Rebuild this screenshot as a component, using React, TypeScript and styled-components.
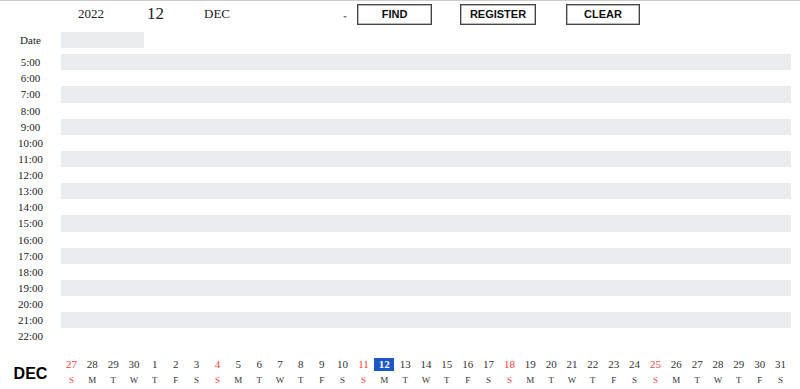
import styled, { createGlobalStyle } from 'styled-components'

const GlobalStyle = createGlobalStyle`
  body {
    margin: 0;
    background: #fff;
    font-family: 'Liberation Serif', 'Times New Roman', serif;
    color: #222;
  }
`

const HOURS = Array.from({ length: 18 }, (_, i) => i + 5)
const WEEK = ['S', 'M', 'T', 'W', 'T', 'F', 'S']

const DAYS = [
  ...[27, 28, 29, 30].map((d) => ({ day: d })),
  ...Array.from({ length: 31 }, (_, i) => ({ day: i + 1 })),
]

const SELECTED_INDEX = 15

const App = () => {
  return (
    <Page>
      <GlobalStyle />
      <Header>
        <Year>2022</Year>
        <DayNumber>12</DayNumber>
        <MonthSelect>
          <span>DEC</span>
          <Caret />
        </MonthSelect>
        <ActionButton $width={75} $offset={0}>
          FIND
        </ActionButton>
        <ActionButton $width={76} $offset={28}>
          REGISTER
        </ActionButton>
        <ActionButton $width={74} $offset={30}>
          CLEAR
        </ActionButton>
      </Header>

      <DateRow>
        <RowLabel>Date</RowLabel>
        <DateBox />
      </DateRow>

      <Schedule>
        {HOURS.map((h, i) => (
          <HourRow key={h}>
            <RowLabel>{h}:00</RowLabel>
            <Band $filled={i % 2 === 0} />
          </HourRow>
        ))}
      </Schedule>

      <Footer>
        <MonthLabel>DEC</MonthLabel>
        <DayStrip>
          {DAYS.map((d, i) => {
            const weekday = WEEK[i % 7]
            const sunday = i % 7 === 0
            return (
              <DayCell key={i}>
                <DayNum $sunday={sunday} $selected={i === SELECTED_INDEX}>
                  {d.day}
                </DayNum>
                <WeekLetter $sunday={sunday}>{weekday}</WeekLetter>
              </DayCell>
            )
          })}
        </DayStrip>
      </Footer>
    </Page>
  )
}

export default App

const Page = styled.div`
  width: 800px;
  height: 389px;
  border-top: 1px solid #cdcdcd;
  box-sizing: border-box;
  overflow: hidden;
`

const Header = styled.div`
  display: flex;
  align-items: center;
  height: 26px;
  padding-left: 78px;
`

const Year = styled.span`
  font-size: 13px;
  width: 27px;
`

const DayNumber = styled.span`
  font-size: 17px;
  margin-left: 42px;
  width: 17px;
`

const MonthSelect = styled.div`
  display: flex;
  align-items: center;
  justify-content: space-between;
  margin-left: 40px;
  width: 143px;
  padding-right: 10px;
  font-size: 13px;
`

const Caret = styled.span`
  width: 0;
  height: 0;
  margin-top: 6px;
  border-left: 2px solid transparent;
  border-right: 2px solid transparent;
  border-top: 2px solid #777;
`

const ActionButton = styled.button<{ $width: number; $offset: number }>`
  width: ${({ $width }) => $width}px;
  height: 21px;
  margin-left: ${({ $offset }) => $offset}px;
  padding: 0;
  background: #fff;
  border: 1px solid #444;
  box-shadow: inset 0 0 0 0.5px #777;
  font-family: 'Liberation Sans', Arial, sans-serif;
  font-weight: bold;
  font-size: 11px;
  color: #111;
`

const DateRow = styled.div`
  display: grid;
  grid-template-columns: 61px 83px;
  align-items: center;
  height: 16px;
  margin-top: 5px;
`

const RowLabel = styled.div`
  text-align: center;
  font-size: 11px;
  color: #222;
`

const DateBox = styled.div`
  height: 16px;
  background: #e9ecef;
`

const Schedule = styled.div`
  display: flex;
  flex-direction: column;
  margin-top: 6px;
`

const HourRow = styled.div`
  display: grid;
  grid-template-columns: 61px 730px;
  align-items: center;
  height: 16.125px;
`

const Band = styled.div<{ $filled: boolean }>`
  height: 16.4px;
  background: ${({ $filled }) => ($filled ? '#e9ecef' : 'transparent')};
`

const Footer = styled.div`
  display: grid;
  grid-template-columns: 61px 730px;
  align-items: center;
  margin-top: 14px;
`

const MonthLabel = styled.div`
  text-align: center;
  font-family: 'Liberation Sans', Arial, sans-serif;
  font-weight: bold;
  font-size: 16px;
  color: #000;
  padding-top: 3px;
`

const DayStrip = styled.div`
  display: grid;
  grid-template-columns: repeat(35, 1fr);
`

const DayCell = styled.div`
  display: flex;
  flex-direction: column;
  align-items: center;
`

const DayNum = styled.div<{ $sunday: boolean; $selected: boolean }>`
  width: 20px;
  height: 13px;
  line-height: 13px;
  text-align: center;
  font-size: 11px;
  font-weight: ${({ $selected }) => ($selected ? 'bold' : 'normal')};
  background: ${({ $selected }) => ($selected ? '#1c57c8' : 'transparent')};
  color: ${({ $sunday, $selected }) => ($selected ? '#fff' : $sunday ? '#ff3b3b' : '#333')};
`

const WeekLetter = styled.div<{ $sunday: boolean }>`
  margin-top: 3px;
  font-size: 9px;
  line-height: 12px;
  color: ${({ $sunday }) => ($sunday ? '#ff3b3b' : '#333')};
`
